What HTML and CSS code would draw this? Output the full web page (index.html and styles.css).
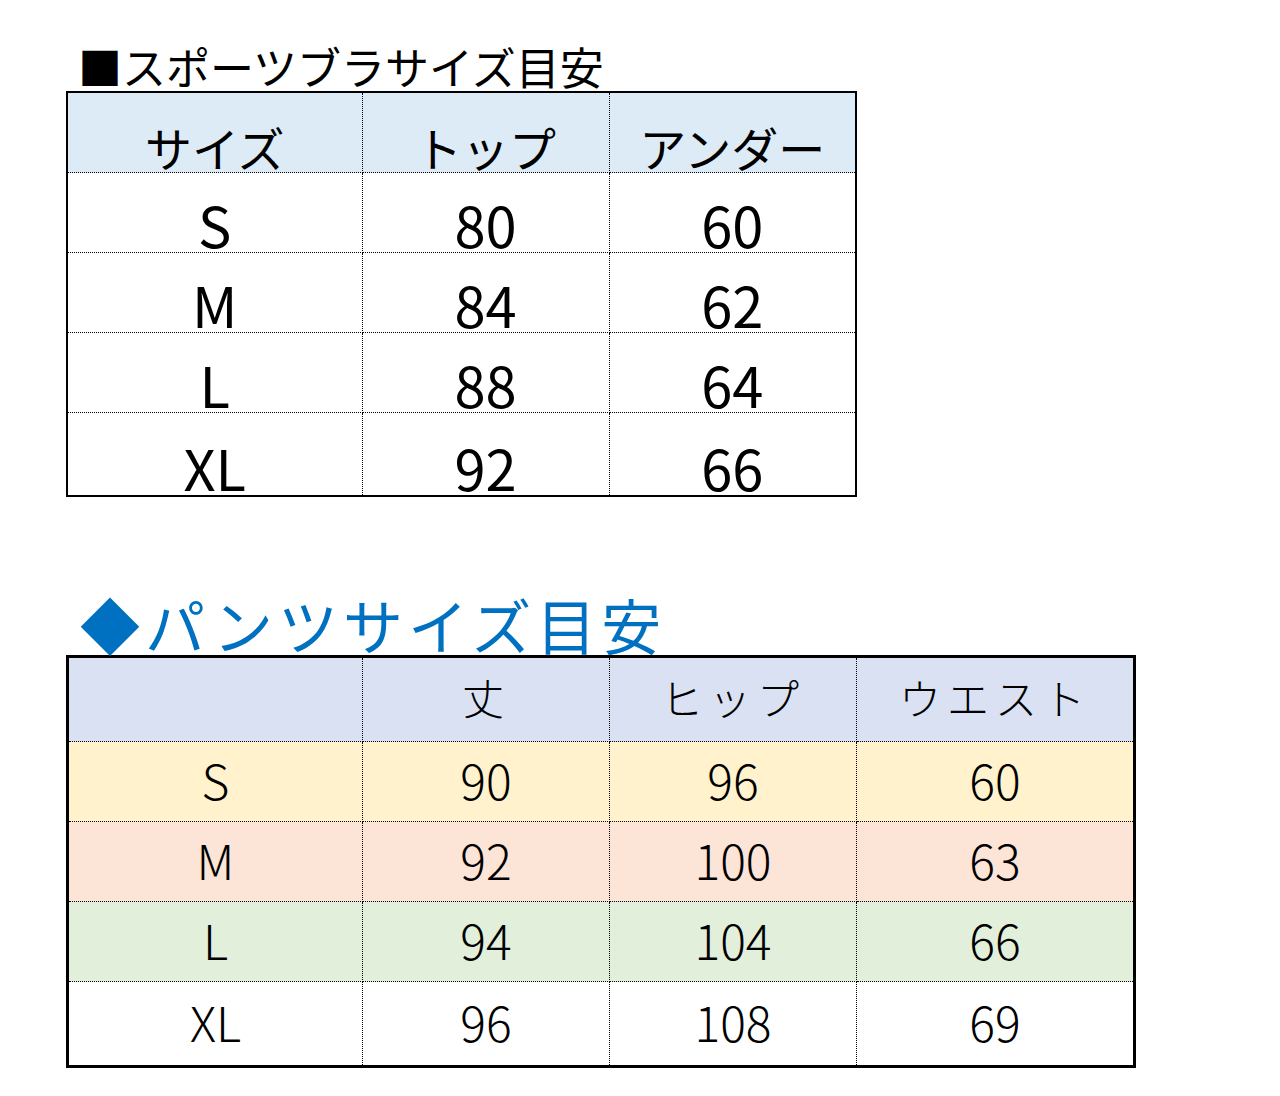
FILE: index.html
```html
<!DOCTYPE html>
<html lang="ja">
<head>
<meta charset="utf-8">
<title>サイズ目安</title>
<link rel="stylesheet" href="styles.css">
</head>
<body>
<main class="page">
  <section class="block block-bra">
    <h2 class="title title-bra">■スポーツブラサイズ目安</h2>
    <table class="chart chart-bra">
      <colgroup><col class="c-size"><col class="c-mid"><col class="c-mid"></colgroup>
      <thead>
        <tr class="head"><th>サイズ</th><th>トップ</th><th>アンダー</th></tr>
      </thead>
      <tbody>
        <tr><td>S</td><td>80</td><td>60</td></tr>
        <tr><td>M</td><td>84</td><td>62</td></tr>
        <tr><td>L</td><td>88</td><td>64</td></tr>
        <tr class="last"><td>XL</td><td>92</td><td>66</td></tr>
      </tbody>
    </table>
  </section>

  <section class="block block-pants">
    <h2 class="title title-pants">◆パンツサイズ目安</h2>
    <table class="chart chart-pants">
      <colgroup><col class="c-size"><col class="c-mid"><col class="c-mid"><col class="c-last"></colgroup>
      <thead>
        <tr class="head"><th></th><th>丈</th><th>ヒップ</th><th>ウエスト</th></tr>
      </thead>
      <tbody>
        <tr class="row-s"><td>S</td><td>90</td><td>96</td><td>60</td></tr>
        <tr class="row-m"><td>M</td><td>92</td><td>100</td><td>63</td></tr>
        <tr class="row-l"><td>L</td><td>94</td><td>104</td><td>66</td></tr>
        <tr class="row-xl last"><td>XL</td><td>96</td><td>108</td><td>69</td></tr>
      </tbody>
    </table>
  </section>
</main>
</body>
</html>
```

FILE: styles.css
```css
html, body {
  margin: 0;
  padding: 0;
  background: #ffffff;
}

body {
  font-family: "Noto Sans CJK JP", "Noto Sans", sans-serif;
  color: #000;
}

.page {
  padding: 41px 0 0 66px;
}

.title {
  margin: 0;
  font-weight: 400;
  white-space: nowrap;
}

.title-bra {
  font-size: 44px;
  line-height: 50px;
  padding-left: 12px;
  color: #000;
}

.title-pants {
  font-size: 60px;
  line-height: 62px;
  letter-spacing: 5px;
  padding-left: 14px;
  color: #0070c0;
}

.block-pants {
  margin-top: 96px;
}

.chart {
  border-collapse: collapse;
  table-layout: fixed;
}

.chart th,
.chart td {
  border: 1px dotted #000;
  text-align: center;
  padding: 0;
  font-weight: 400;
  white-space: nowrap;
}

.c-size { width: 295px; }
.c-mid { width: 247px; }
.c-last { width: 278px; }

/* Bra chart */
.chart-bra {
  width: 789px;
  border: 2px solid #000;
}

.chart-bra th,
.chart-bra td {
  height: 79px;
  vertical-align: bottom;
  line-height: 1;
}

.chart-bra th {
  height: 77px;
  font-size: 47px;
  background: #ddebf7;
  padding-bottom: 2px;
}

.chart-bra td {
  font-size: 56px;
}

.chart-bra .last td {
  height: 82px;
}

/* Pants chart */
.chart-pants {
  width: 1067px;
  border: 3px solid #000;
}

.chart-pants th,
.chart-pants td {
  height: 73px;
  padding-bottom: 6px;
  vertical-align: middle;
  line-height: 1;
  font-weight: 300;
}

.chart-pants th {
  height: 77px;
  font-size: 42px;
  letter-spacing: 6px;
}

.chart-pants td {
  font-size: 48px;
}

.chart-pants .last td {
  height: 77px;
}

.chart-pants .head { background: #d9e1f2; }
.chart-pants .row-s { background: #fff2cc; }
.chart-pants .row-m { background: #fce4d6; }
.chart-pants .row-l { background: #e2efda; }
.chart-pants .row-xl { background: #ffffff; }
```
